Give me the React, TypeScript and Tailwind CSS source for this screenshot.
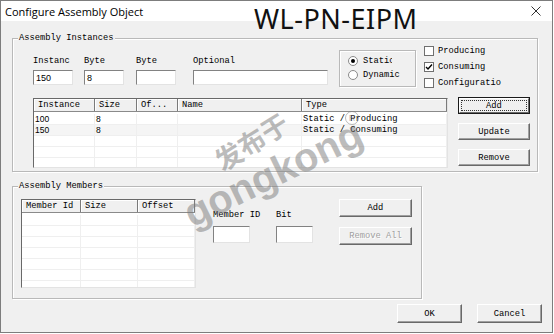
import React from "react";

const mono = "font-['Liberation_Mono',monospace] text-[8.75px] leading-[12px]";

const Button = ({ label, className = "", disabled = false }: { label: string; className?: string; disabled?: boolean }) => (
  <div
    className={`flex items-center justify-center bg-[#f0f0f0] border border-t-white border-l-white border-r-[#696969] border-b-[#696969] shadow-[inset_-1px_-1px_0_#a0a0a0] ${
      disabled ? "text-[#a0a0a0] [text-shadow:1px_1px_0_#fff]" : "text-black"
    } ${className}`}
  >
    {label}
  </div>
);

const DefaultButton = ({ label, className = "" }: { label: string; className?: string }) => (
  <div className={`border border-[#1a1a1a] ${className}`}>
    <div className="h-full border border-t-white border-l-white border-r-[#696969] border-b-[#696969] p-[1px]">
      <div className="h-full flex items-center justify-center border border-dotted border-[#333]">{label}</div>
    </div>
  </div>
);

const Field = ({ className = "", value = "" }: { className?: string; value?: string }) => (
  <div
    className={`bg-white border border-t-[#828282] border-l-[#828282] border-r-[#e3e3e3] border-b-[#e3e3e3] flex items-center pl-[2px] font-['Liberation_Sans',sans-serif] text-[9px] ${className}`}
  >
    {value}
  </div>
);

const Group = ({ title, className = "", children }: { title?: string; className?: string; children?: React.ReactNode }) => (
  <div className={`relative border border-[#b9b9b9] shadow-[inset_1px_1px_0_#fff,1px_1px_0_#fff] ${className}`}>
    {title && <span className="absolute -top-[7px] left-[5px] bg-[#f0f0f0] px-[1px] leading-[12px]">{title}</span>}
    {children}
  </div>
);

const Check = ({ label, checked = false }: { label: string; checked?: boolean }) => (
  <div className="flex items-center h-[16px]">
    <div className="w-[10px] h-[10px] bg-white border border-[#6f6f6f] flex items-center justify-center">
      {checked && (
        <svg width="8" height="8" viewBox="0 0 8 8">
          <path d="M1 4 L3 6 L7 1.5" stroke="#000" strokeWidth="1.4" fill="none" />
        </svg>
      )}
    </div>
    <span className="ml-[4px]">{label}</span>
  </div>
);

const Radio = ({ label, on = false, clip = "" }: { label: string; on?: boolean; clip?: string }) => (
  <div className="flex items-center h-[14px]">
    <div className="w-[10px] h-[10px] rounded-full bg-white border border-[#8a8a8a] flex items-center justify-center">
      {on && <div className="w-[4px] h-[4px] rounded-full bg-black" />}
    </div>
    <span className={`ml-[5px] overflow-hidden whitespace-nowrap ${clip}`}>{label}</span>
  </div>
);

type Col = { name: string; w: string };

const ListView = ({ cols, rows, className = "", emptyRows }: { cols: Col[]; rows: string[][]; className?: string; emptyRows: number }) => (
  <div className={`bg-white border border-t-[#696969] border-l-[#696969] border-r-[#e3e3e3] border-b-[#e3e3e3] overflow-hidden ${className}`}>
    <div className="flex h-[13px] bg-[#f0f0f0] border-b border-b-[#8a8a8a]">
      {cols.map((c) => (
        <div key={c.name} className={`${c.w} shrink-0 h-full border-r border-r-[#7a7a7a] shadow-[inset_1px_1px_0_#fff] pl-[4px] leading-[12px] whitespace-nowrap overflow-hidden`}>
          {c.name}
        </div>
      ))}
    </div>
    <div className="pt-[2px]">
      {rows.map((r, i) => (
        <div key={i} className={`flex h-[11px] border-b border-b-[#efefef] ${i === 1 ? "bg-[#f5f5f5]" : ""}`}>
          {cols.map((c, j) => (
            <div
              key={c.name}
              className={`${c.w} shrink-0 h-full border-r border-r-[#efefef] pl-[1px] leading-[11px] whitespace-nowrap overflow-hidden ${
                j < 2 ? "font-['Liberation_Sans',sans-serif] text-[8.5px]" : ""
              }`}
            >
              {r[j]}
            </div>
          ))}
        </div>
      ))}
      {Array.from({ length: emptyRows }).map((_, i) => (
        <div key={"e" + i} className="flex h-[11px] border-b border-b-[#efefef]">
          {cols.map((c) => (
            <div key={c.name} className={`${c.w} shrink-0 h-full border-r border-r-[#efefef]`} />
          ))}
        </div>
      ))}
    </div>
  </div>
);

export default function App() {
  return (
    <div className={`relative w-[554px] h-[334px] bg-white overflow-hidden ${mono} text-black`}>
      <div className="w-[553px] h-[333px] bg-[#f0f0f0] border border-[#7d7d7d] flex flex-col">
        {/* title bar */}
        <div className="h-[20px] shrink-0 bg-white flex items-center justify-between pl-[4px] pr-[11px]">
          <span className="font-['Open_Sans',sans-serif] text-[11px] leading-none text-black">Configure Assembly Object</span>
          <svg width="10" height="10" viewBox="0 0 10 10">
            <path d="M0.5 0.5 L9.5 9.5 M9.5 0.5 L0.5 9.5" stroke="#333" strokeWidth="1" />
          </svg>
        </div>

        {/* Assembly Instances */}
        <Group title="Assembly Instances" className="ml-[11px] mt-[17px] w-[526px] h-[134px] shrink-0">
          <div className="pl-[20px]">
            <div className="flex items-start">
              <div className="flex mt-[16px]">
                <div className="flex flex-col w-[40px]">
                  <span>Instanc</span>
                  <Field className="mt-[3px] h-[15px] w-[40px]" value="150" />
                </div>
                <div className="flex flex-col w-[40px] ml-[11px]">
                  <span>Byte</span>
                  <Field className="mt-[3px] h-[15px] w-[40px]" value="8" />
                </div>
                <div className="flex flex-col w-[40px] ml-[12px]">
                  <span>Byte</span>
                  <Field className="mt-[3px] h-[15px] w-[40px]" />
                </div>
                <div className="flex flex-col w-[135px] ml-[17px]">
                  <span>Optional</span>
                  <Field className="mt-[3px] h-[15px] w-[135px]" />
                </div>
              </div>
              <Group className="ml-[11px] mt-[11px] w-[77px] h-[37px] pl-[8px] pt-[3px]">
                <Radio label="Static" on clip="w-[29px]" />
                <Radio label="Dynamic" />
              </Group>
              <div className="ml-[8px] mt-[4px] flex flex-col">
                <Check label="Producing" />
                <Check label="Consuming" checked />
                <Check label="Configuratio" />
              </div>
            </div>

            <div className="flex items-start mt-[6px]">
              <ListView
                className="mt-[1px] w-[415px] h-[70px]"
                cols={[
                  { name: "Instance", w: "w-[61px]" },
                  { name: "Size", w: "w-[42px]" },
                  { name: "Of...", w: "w-[41px]" },
                  { name: "Name", w: "w-[124px]" },
                  { name: "Type", w: "w-[145px]" },
                ]}
                rows={[
                  ["100", "8", "", "", "Static / Producing"],
                  ["150", "8", "", "", "Static / Consuming"],
                ]}
                emptyRows={3}
              />
              <div className="ml-[10px] flex flex-col">
                <DefaultButton label="Add" className="w-[72px] h-[17px]" />
                <Button label="Update" className="mt-[9px] w-[72px] h-[17px]" />
                <Button label="Remove" className="mt-[9px] w-[72px] h-[17px]" />
              </div>
            </div>
          </div>
        </Group>

        {/* Assembly Members */}
        <Group title="Assembly Members" className="ml-[11px] mt-[14px] w-[410px] h-[113px] shrink-0">
          <div className="flex items-start pl-[8px] pt-[12px]">
            <ListView
              className="w-[175px] h-[89px]"
              cols={[
                { name: "Member Id", w: "w-[59px]" },
                { name: "Size", w: "w-[57px]" },
                { name: "Offset", w: "w-[57px]" },
              ]}
              rows={[]}
              emptyRows={7}
            />
            <div className="flex ml-[17px] mt-[10px]">
              <div className="flex flex-col w-[37px]">
                <span className="whitespace-nowrap">Member ID</span>
                <Field className="mt-[5px] h-[17px] w-[37px]" />
              </div>
              <div className="flex flex-col w-[37px] ml-[26px]">
                <span>Bit</span>
                <Field className="mt-[5px] h-[17px] w-[37px]" />
              </div>
            </div>
            <div className="flex flex-col ml-[26px]">
              <Button label="Add" className="w-[73px] h-[18px]" />
              <Button label="Remove All" disabled className="mt-[10px] w-[73px] h-[18px]" />
            </div>
          </div>
        </Group>

        <div className="flex justify-end mt-[5px] pr-[10px]">
          <Button label="OK" className="w-[65px] h-[19px]" />
          <Button label="Cancel" className="ml-[15px] w-[65px] h-[19px]" />
        </div>
      </div>

      {/* banner */}
      <div className="absolute left-[254px] top-[4px] font-['Noto_Sans',sans-serif] text-[27px] leading-[30px] text-[#111] tracking-[0.5px]">
        WL-PN-EIPM
      </div>

      {/* watermark */}
      <div className="absolute left-[251px] top-[141px] -translate-x-1/2 -translate-y-1/2 -rotate-[32deg] font-['Noto_Sans_CJK_SC',sans-serif] text-[27px] font-bold leading-none text-[#7a7a7a]/50 whitespace-nowrap pointer-events-none">
        发布于
      </div>
      <div className="absolute left-[273px] top-[173px] -translate-x-1/2 -translate-y-1/2 -rotate-[26deg] font-['Liberation_Sans',sans-serif] text-[40px] font-bold leading-none text-[#7a7a7a]/50 whitespace-nowrap pointer-events-none">
        gongkong
      </div>
      <div className="absolute left-[345px] top-[111px] w-[14px] h-[14px] rounded-full border border-[#7a7a7a]/50 flex items-center justify-center font-['Liberation_Sans',sans-serif] text-[9px] leading-none text-[#7a7a7a]/50 pointer-events-none">
        R
      </div>
    </div>
  );
}
